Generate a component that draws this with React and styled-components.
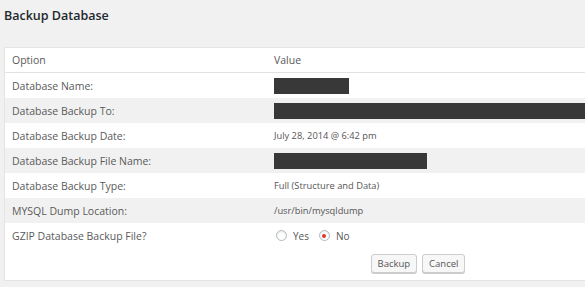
import React from "react";
import styled, { createGlobalStyle } from "styled-components";

const Global = createGlobalStyle`
    html, body {
        margin: 0;
        padding: 0;
        background: #f1f1f1;
        overflow: hidden;
    }
    body {
        font-family: "Open Sans", "Liberation Sans", sans-serif;
        color: #555;
    }
`

const Page = styled.div`
    padding: 6px 0 0 4px;
    width: 581px;
    overflow: hidden;
`

const Title = styled.h2`
    margin: 0;
    font-size: 12.5px;
    font-weight: 600;
    color: #23282d;
    line-height: 20px;
`

const Panel = styled.div`
    margin-top: 21px;
    width: 826px;
    background: #fff;
    border: 1px solid #e5e5e5;
    box-shadow: 0 1px 1px rgba(0, 0, 0, 0.04);
`

const Row = styled.div`
    display: grid;
    grid-template-columns: 262px 1fr;
    align-items: center;
    height: ${p => (p.$head ? 24 : 25)}px;
    padding-left: 7px;
    background: ${p => (p.$alt ? "#f1f1f1" : "#fff")};
    border-bottom: ${p => (p.$head ? "1px solid #e1e1e1" : "none")};
`

const Label = styled.div`
    font-size: 10.5px;
    color: #5a5a5a;
`

const Value = styled.div`
    font-size: 9.3px;
    color: #555;
    display: flex;
    align-items: center;
`

const Redact = styled.div`
    height: 16px;
    width: ${p => p.$w}px;
    background: #383838;
`

const Radio = styled.span`
    display: inline-block;
    box-sizing: border-box;
    width: 11px;
    height: 11px;
    border-radius: 50%;
    border: 1px solid #b4b9be;
    background: #fff;
    box-shadow: inset 0 1px 2px rgba(0, 0, 0, 0.1);
    position: relative;
    margin-right: 6px;
    &::after {
        content: "";
        display: ${p => (p.$checked ? "block" : "none")};
        position: absolute;
        left: 2.5px;
        top: 2.5px;
        width: 4px;
        height: 4px;
        border-radius: 50%;
        background: #e3352f;
    }
`

const Option = styled.label`
    display: inline-flex;
    align-items: center;
    font-size: 10px;
    margin-right: 10px;
    &:first-child {
        margin-left: 2px;
    }
`

const Actions = styled.div`
    display: flex;
    justify-content: center;
    gap: 5px;
    padding: 6px 0 7px;
`

const Button = styled.button`
    height: 19px;
    padding: 0 6px;
    font-family: inherit;
    font-size: 9.5px;
    color: #555;
    background: #f7f7f7;
    border: 1px solid #ccc;
    border-radius: 3px;
    box-shadow: 0 1px 0 #ccc;
`

const rows = [
    { label: "Database Name:", value: <Redact $w={75} /> },
    { label: "Database Backup To:", value: <Redact $w={560} /> },
    { label: "Database Backup Date:", value: "July 28, 2014 @ 6:42 pm" },
    { label: "Database Backup File Name:", value: <Redact $w={153} /> },
    { label: "Database Backup Type:", value: "Full (Structure and Data)" },
    { label: "MYSQL Dump Location:", value: "/usr/bin/mysqldump" },
];

export default function App(){
    return(
        <Page>
            <Global/>
            <Title>Backup Database</Title>
            <Panel>
                <Row $head>
                    <Label>Option</Label>
                    <Label>Value</Label>
                </Row>
                {rows.map((r, i) => (
                    <Row key={r.label} $alt={i % 2 === 1}>
                        <Label>{r.label}</Label>
                        <Value>{r.value}</Value>
                    </Row>
                ))}
                <Row>
                    <Label>GZIP Database Backup File?</Label>
                    <Value>
                        <Option><Radio/>Yes</Option>
                        <Option><Radio $checked/>No</Option>
                    </Value>
                </Row>
                <Actions>
                    <Button>Backup</Button>
                    <Button>Cancel</Button>
                </Actions>
            </Panel>
        </Page>
    )
}
